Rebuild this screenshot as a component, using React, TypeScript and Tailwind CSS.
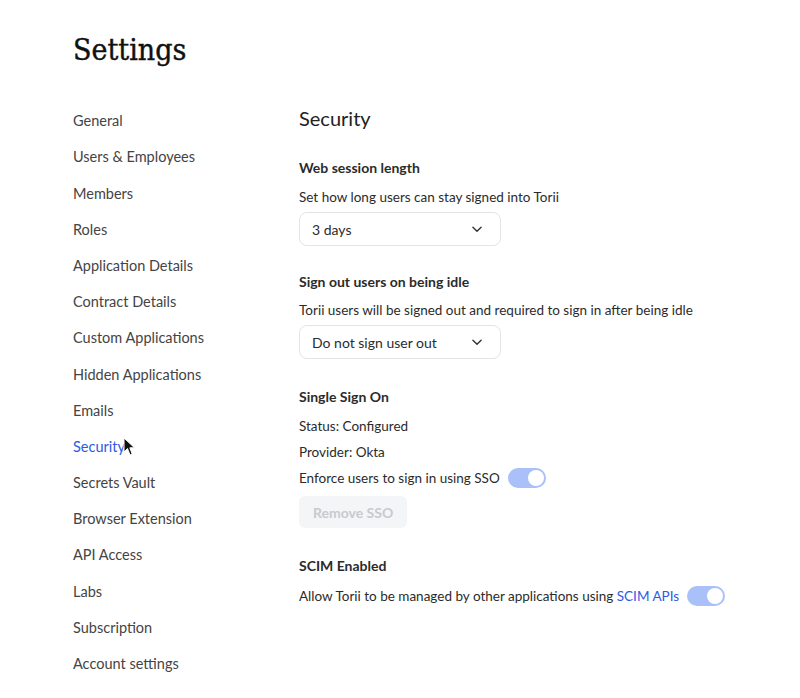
const navItems = [
  "General",
  "Users & Employees",
  "Members",
  "Roles",
  "Application Details",
  "Contract Details",
  "Custom Applications",
  "Hidden Applications",
  "Emails",
  "Security",
  "Secrets Vault",
  "Browser Extension",
  "API Access",
  "Labs",
  "Subscription",
  "Account settings",
];

function Chevron() {
  return (
    <svg width="14" height="14" viewBox="0 0 24 24" fill="none" stroke="#333" strokeWidth="2.4" strokeLinecap="round" strokeLinejoin="round">
      <path d="M5 9l7 7 7-7" />
    </svg>
  );
}

function Select({ value }: { value: string }) {
  return (
    <div className="flex h-[34px] w-[202px] items-center justify-between rounded-lg border border-[#e2e4e8] pl-3 pr-4 text-[14px] text-[#2b2b2b]">
      <span>{value}</span>
      <Chevron />
    </div>
  );
}

function Toggle() {
  return (
    <div className="flex h-[20px] w-[38px] items-center justify-end rounded-full bg-[#a9c0f8] pr-[2px]">
      <div className="h-[16px] w-[16px] rounded-full bg-white" />
    </div>
  );
}

function Cursor() {
  return (
    <svg className="absolute left-[50px] top-[8px]" width="14" height="20" viewBox="0 0 14 20">
      <path d="M1 1 L1 15 L4.5 11.5 L7 18 L9.2 17 L6.8 10.8 L11.5 10.8 Z" fill="#111" stroke="#fff" strokeWidth="1" />
    </svg>
  );
}

export default function App() {
  return (
    <div className="min-h-[698px] w-[800px] bg-white text-[#333] font-['Lato',sans-serif]">
      <div className="pl-[73px] pt-[30px]">
        <h1 className="font-['DejaVu_Serif_Condensed','DejaVu_Serif',serif] text-[30px] leading-[40px] text-[#111] [-webkit-text-stroke:0.4px_#111]">Settings</h1>
        <div className="mt-[34px] flex">
          <nav className="-mt-[1px] flex w-[226px] flex-col">
            {navItems.map((item) => (
              <div key={item} className="relative flex h-[36.2px] items-center text-[14.5px]">
                <span className={item === "Security" ? "text-[#2d5be3]" : "text-[#444]"}>{item}</span>
                {item === "Security" && <Cursor />}
              </div>
            ))}
          </nav>
          <section className="flex flex-col text-[13.5px] text-[#2b2b2b]">
            <h2 className="text-[20px] leading-[28px] text-[#222]">Security</h2>

            <h3 className="mt-[26px] font-bold text-[14px] leading-[20px]">Web session length</h3>
            <p className="mt-[9px] leading-[20px]">Set how long users can stay signed into Torii</p>
            <div className="mt-[5px]">
              <Select value="3 days" />
            </div>

            <h3 className="mt-[26px] font-bold text-[14px] leading-[20px]">Sign out users on being idle</h3>
            <p className="mt-[8px] leading-[20px]">Torii users will be signed out and required to sign in after being idle</p>
            <div className="mt-[5px]">
              <Select value="Do not sign user out" />
            </div>

            <h3 className="mt-[28px] font-bold text-[14px] leading-[20px]">Single Sign On</h3>
            <p className="mt-[9px] leading-[20px]">Status: Configured</p>
            <p className="mt-[6px] leading-[20px]">Provider: Okta</p>
            <div className="mt-[6px] flex items-center gap-2 leading-[20px]">
              <span>Enforce users to sign in using SSO</span>
              <Toggle />
            </div>
            <div className="mt-[8px]">
              <button className="h-[32px] rounded-md bg-[#f4f5f7] px-[14px] text-[14px] font-bold text-[#c8cace]">Remove SSO</button>
            </div>

            <h3 className="mt-[28px] font-bold text-[14px] leading-[20px]">SCIM Enabled</h3>
            <div className="mt-[10px] flex items-center gap-2 leading-[20px]">
              <span>
                Allow Torii to be managed by other applications using <span className="text-[#2d5be3]">SCIM APIs</span>
              </span>
              <Toggle />
            </div>
          </section>
        </div>
      </div>
    </div>
  );
}
